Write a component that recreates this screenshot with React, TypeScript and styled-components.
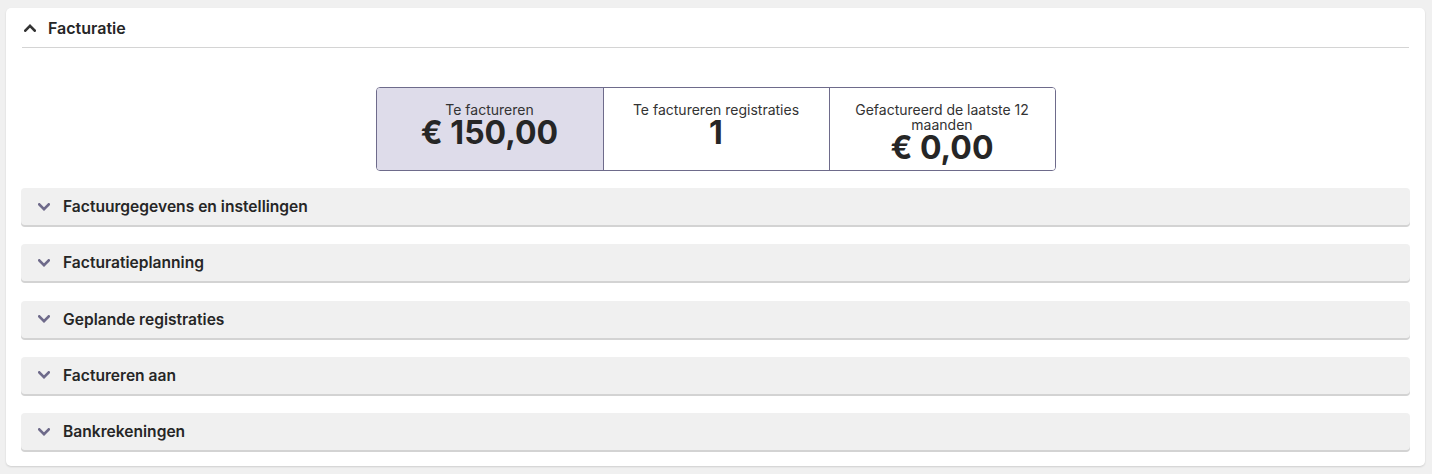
import React from "react";
import styled, { createGlobalStyle } from "styled-components";

const Global = createGlobalStyle`
  html, body { margin: 0; padding: 0; background: #f0f0f0; }
  body { font-family: Inter, "Noto Sans", Arial, sans-serif; color: #262626; }
  * { box-sizing: border-box; }
`;

const Page = styled.div`
  padding: 8px 7px 6px 6px;
`;

const Card = styled.section`
  background: #ffffff;
  border-radius: 5px;
  box-shadow: 0 1px 2px rgba(0, 0, 0, 0.14);
  padding: 0 15px 16px;
`;

const Header = styled.div`
  height: 40px;
  margin: 0 1px;
  display: flex;
  align-items: center;
  gap: 12px;
  padding-left: 2px;
  border-bottom: 1px solid #d4d4d4;
`;

const Title = styled.h2`
  margin: 0;
  font-size: 16px;
  font-weight: 600;
  color: #262626;
`;

const Stats = styled.div`
  display: flex;
  justify-content: center;
  margin: 39px 0 17px;
`;

const StatGroup = styled.div`
  display: grid;
  grid-template-columns: repeat(3, 226px);
  border: 1px solid #6e6b8b;
  border-radius: 4px;
  overflow: hidden;
`;

const Stat = styled.div<{ $active?: boolean }>`
  background: ${(p) => (p.$active ? "#dedcea" : "#ffffff")};
  border-left: ${(p) => (p.$active ? "none" : "1px solid #6e6b8b")};
  padding: 14px 12px 6px;
  text-align: center;
`;

const StatLabel = styled.div`
  font-size: 14px;
  line-height: 15px;
  color: #333;
`;

const StatValue = styled.div`
  font-size: 32px;
  line-height: 32px;
  font-weight: 700;
  color: #262626;
`;

const Rows = styled.div`
  display: flex;
  flex-direction: column;
  gap: 19.25px;
`;

const Row = styled.div`
  height: 37px;
  background: #f0f0f0;
  border-radius: 4px;
  box-shadow: 0 2px 0 #d3d3d3;
  display: flex;
  align-items: center;
  gap: 13px;
  padding-left: 17px;
  cursor: pointer;
`;

const RowTitle = styled.span`
  font-size: 15.6px;
  font-weight: 600;
  color: #262626;
`;

const Chevron = ({ up, color }: { up?: boolean; color: string }) => (
  <svg width="12" height="8" viewBox="0 0 12 8" style={{ flex: "none" }}>
    <path
      d={up ? "M1.3 6.6 L6 1.9 L10.7 6.6" : "M1.3 1.4 L6 6.1 L10.7 1.4"}
      fill="none"
      stroke={color}
      strokeWidth="2.6"
      strokeLinecap="square"
      strokeLinejoin="miter"
    />
  </svg>
);

const sections = [
  "Factuurgegevens en instellingen",
  "Facturatieplanning",
  "Geplande registraties",
  "Factureren aan",
  "Bankrekeningen",
];

export default function App() {
  return (
    <Page>
      <Global />
      <Card>
        <Header>
          <Chevron up color="#333" />
          <Title>Facturatie</Title>
        </Header>
        <Stats>
          <StatGroup>
            <Stat $active>
              <StatLabel>Te factureren</StatLabel>
              <StatValue>€ 150,00</StatValue>
            </Stat>
            <Stat>
              <StatLabel>Te factureren registraties</StatLabel>
              <StatValue>1</StatValue>
            </Stat>
            <Stat>
              <StatLabel>Gefactureerd de laatste 12 maanden</StatLabel>
              <StatValue>€ 0,00</StatValue>
            </Stat>
          </StatGroup>
        </Stats>
        <Rows>
          {sections.map((s) => (
            <Row key={s}>
              <Chevron color="#6e6a8a" />
              <RowTitle>{s}</RowTitle>
            </Row>
          ))}
        </Rows>
      </Card>
    </Page>
  );
}
